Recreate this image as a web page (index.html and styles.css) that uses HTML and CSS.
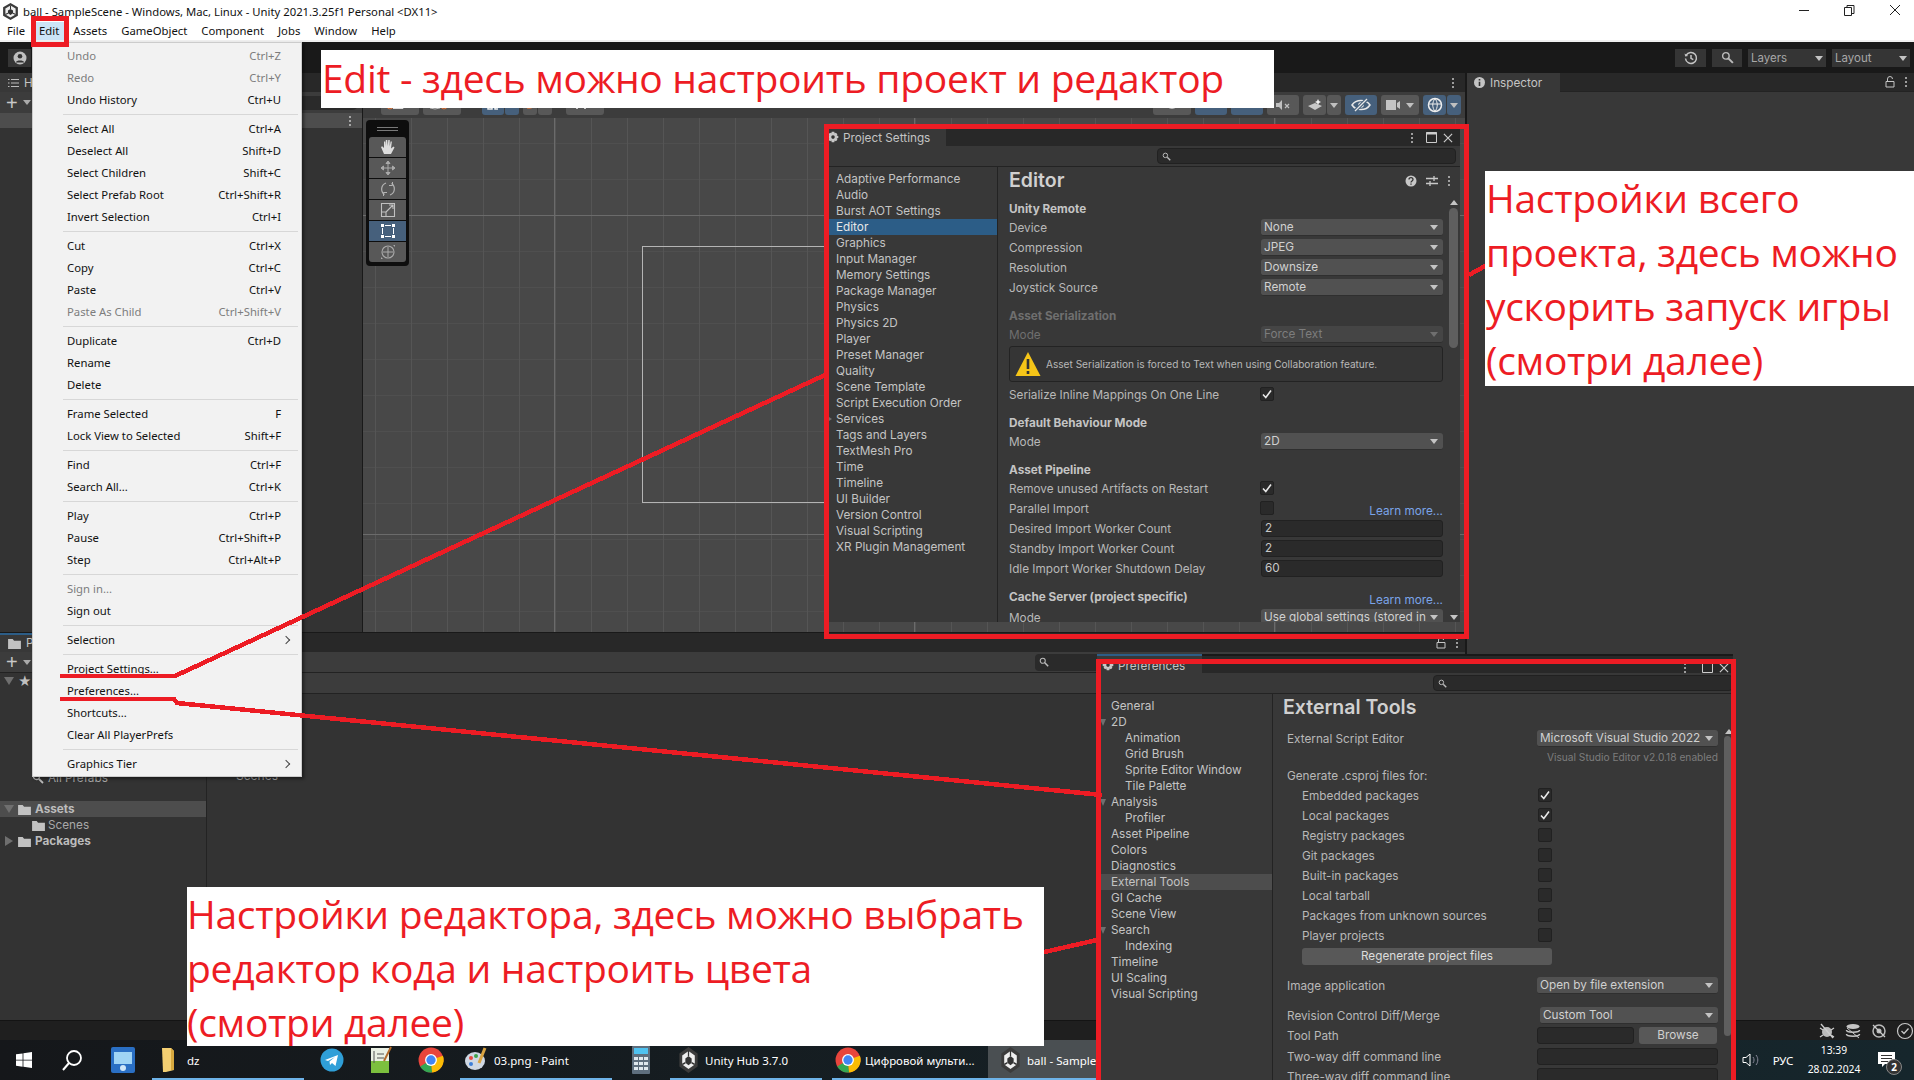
FILE: index.html
```html
<!DOCTYPE html>
<html lang="ru">
<head>
<meta charset="utf-8">
<title>ball - SampleScene</title>
<link rel="stylesheet" href="styles.css">
</head>
<body>
<svg class="defs" width="0" height="0">
  <symbol id="unity" viewBox="0 0 20 20"><polygon points="10,0 18.7,5 18.7,15 10,20 1.3,15 1.3,5" fill="#3b3b3b"/><polygon points="10,3 16,6.5 16,13.5 10,17 4,13.5 4,6.5" fill="#eee"/><polygon points="10,7 13,8.8 13,12.2 10,14 7,12.2 7,8.8" fill="#333"/><path d="M10 3v4M4 13.5l3-1.4M16 13.5l-3-1.4" stroke="#333" stroke-width="1.2"/></symbol>
  <symbol id="gear" viewBox="0 0 12 12"><path d="M6 .2l1.300.1.400 1.500 1.200-.5 1.500 1.400-.7 1.200 1.600.6v2l-1.600.6.7 1.200-1.500 1.400-1.200-.6-.4 1.600H4.700l-.4-1.600-1.200.6-1.500-1.400.7-1.200L.7 6.500v-2l1.600-.6-.7-1.200L3.100 1.300l1.200.5.400-1.500z" fill="#c8c8c8"/><circle cx="6" cy="5.600" r="1.800" fill="#333"/></symbol>
  <symbol id="glass" viewBox="0 0 12 12"><circle cx="4.500" cy="4.500" r="3" fill="none" stroke="#bbb" stroke-width="1.300"/><path d="M7 7l4 4" stroke="#bbb" stroke-width="1.800"/></symbol>
  <symbol id="check" viewBox="0 0 12 12"><path d="M2 6.500l2.800 3L10 2.500" fill="none" stroke="#e8e8e8" stroke-width="1.600"/></symbol>
  <symbol id="folder" viewBox="0 0 14 12"><path d="M0 1h5l1.500 2H14v9H0z" fill="#c2c2c2"/></symbol>
  <symbol id="dots" viewBox="0 0 4 12"><circle cx="2" cy="2" r="1" fill="#c4c4c4"/><circle cx="2" cy="6" r="1" fill="#c4c4c4"/><circle cx="2" cy="10" r="1" fill="#c4c4c4"/></symbol>
  <symbol id="chrome" viewBox="0 0 24 24"><circle cx="12" cy="12" r="11.500" fill="#e8453c"/><path d="M12 12L2 18a11.500 11.500 0 0 0 11 5.500z" fill="#34a853"/><path d="M12 12l11-4a11.500 11.500 0 0 1-10 15.500z" fill="#fbbc05"/><circle cx="12" cy="12" r="5.500" fill="#fff"/><circle cx="12" cy="12" r="4.300" fill="#4285f4"/></symbol>
</svg>

<header class="titlebar">
  <svg class="ti-logo"><use href="#unity"/></svg>
  <span class="ti-text">ball - SampleScene - Windows, Mac, Linux - Unity 2021.3.25f1 Personal &lt;DX11&gt;</span>
  <div class="winctl">
    <svg width="46" height="22" viewBox="0 0 46 22"><path d="M23 10.500h10" stroke="#222"/></svg>
    <svg width="46" height="22" viewBox="0 0 46 22"><path d="M22.500 7.500h7v8h-7zM25 7.500V5.500h7v8h-2.500" fill="none" stroke="#222"/></svg>
    <svg width="46" height="22" viewBox="0 0 46 22"><path d="M22 5l10 10M32 5L22 15" stroke="#222"/></svg>
  </div>
</header>
<nav class="menubar">
  <span class="mi">File</span><span class="mi mi-on">Edit</span><span class="mi">Assets</span><span class="mi">GameObject</span><span class="mi">Component</span><span class="mi">Jobs</span><span class="mi">Window</span><span class="mi">Help</span>
</nav>
<div class="toolbar">
  <div class="tbtn account"><svg width="14" height="14" viewBox="0 0 14 14"><circle cx="7" cy="7" r="6.500" fill="#c0c0c0"/><circle cx="7" cy="5.300" r="2.300" fill="#333"/><path d="M2.800 11.500c.6-2.600 7.800-2.600 8.400 0" fill="#333"/></svg></div>
  <div class="tb-right">
    <div class="tbtn hist"><svg width="14" height="14" viewBox="0 0 14 14"><path d="M2.200 4.200A5.500 5.500 0 1 1 1.500 7.500" fill="none" stroke="#c4c4c4" stroke-width="1.500"/><path d="M.6 2.500l.6 3 3-.6z" fill="#c4c4c4"/><path d="M7 4v3.300l2.300 1.300" fill="none" stroke="#c4c4c4" stroke-width="1.500"/></svg></div>
    <div class="tbtn srch"><svg width="13" height="13"><use href="#glass"/></svg></div>
    <div class="tbtn tdd">Layers</div>
    <div class="tbtn tdd">Layout</div>
  </div>
</div>

<main class="workspace">
  <div class="editor-left">
    <div class="upper">
      <section class="hierarchy">
        <div class="tabstrip"><span class="tab tab-h"><svg class="noshrink" width="11" height="10" viewBox="0 0 11 10"><path d="M3 1.500h8M3 5h8M3 8.500h8M0 1.500h1.500M0 5h1.500M0 8.500h1.500" stroke="#bbb"/></svg>H</span></div>
        <div class="h-tools"><span class="plus">+</span><span class="caret"></span><span class="h-search"></span></div>
        <div class="h-head"><span class="grow"></span><svg class="vdots"><use href="#dots"/></svg></div>
        <div class="h-body"></div>
      </section>
      <section class="scene">
        <div class="tabstrip end"><svg class="vdots"><use href="#dots"/></svg></div>
        <div class="scene-tools">
          <span class="sb w38"><svg width="30" height="20" viewBox="0 0 30 20"><circle cx="5" cy="11" r="3" fill="none" stroke="#d9743a"/><path d="M8 13.500h10v-5" fill="none" stroke="#ddd"/></svg></span><span class="sb w38"><svg width="30" height="20" viewBox="0 0 30 20"><path d="M3 13l5 1 5-1" fill="none" stroke="#bbb"/><circle cx="17" cy="11" r="3" fill="none" stroke="#d9743a"/></svg></span>
          <span class="sb w22 blue ml20"><svg width="16" height="20" viewBox="0 0 16 20"><path d="M3 9v5h4V9M10 9v5h3" fill="none" stroke="#eee" stroke-width="1.500"/></svg></span><span class="sb w14 blue join"></span>
          <span class="sb w14 ml4"><svg width="12" height="20" viewBox="0 0 12 20"><path d="M3 13c3 1 6 0 7-3" fill="none" stroke="#d9743a"/></svg></span><span class="sb w14 join"></span>
          <span class="sb w38 ml14"><svg width="30" height="20" viewBox="0 0 30 20"><path d="M6 9v5h2V9M14 9v5h2V9" fill="#ccc"/></svg></span>
          <span class="spacer"></span>
          <span class="sb w38"><svg width="30" height="20" viewBox="0 0 30 20"><circle cx="15" cy="8" r="6" fill="#bdbdbd"/></svg></span>
          <span class="sb w32 blue"><svg width="20" height="20" viewBox="0 0 20 20"><path d="M3 9h5v3H3zM11 9h6v3h-6z" fill="#eee"/></svg></span><span class="sb w32 blue"><svg width="20" height="20" viewBox="0 0 20 20"><path d="M8 9h4v4H8z" fill="#eee"/></svg></span>
          <span class="sb w32"><svg width="18" height="14" viewBox="0 0 18 14"><path d="M2 5h3l3-3v10L5 9H2z" fill="#c0c0c0"/><path d="M11 6l4 4M15 6l-4 4" stroke="#c0c0c0" stroke-width="1.200"/></svg></span>
          <span class="sb w23"><svg width="18" height="14" viewBox="0 0 18 14"><path d="M2 8l7-3 7 3-7 4z" fill="#c8c8c8"/><path d="M12 1l1 2 2 1-2 1-1 2-1-2-2-1 2-1z" fill="#eee"/></svg></span><span class="sb w14 join tri"></span>
          <span class="sb w32 blue"><svg width="22" height="14" viewBox="0 0 22 14"><path d="M2 7c4-6 14-6 18 0-4 6-14 6-18 0z" fill="none" stroke="#e8e8e8" stroke-width="1.500"/><circle cx="11" cy="7" r="2.800" fill="#e8e8e8"/><path d="M5 13L17 1" stroke="#46607c" stroke-width="3.500"/><path d="M5 13L17 1" stroke="#e8e8e8" stroke-width="1.300"/></svg></span>
          <span class="sb w38 cam"><svg width="14" height="12" viewBox="0 0 14 12"><path d="M0 1h10v10H0zM11 4l3-2v8l-3-2z" fill="#c4c4c4"/></svg><i class="tri-i"></i></span>
          <span class="sb w23 blue"><svg width="16" height="16" viewBox="0 0 16 16"><circle cx="8" cy="8" r="6.500" fill="none" stroke="#eee" stroke-width="1.500"/><path d="M1.500 7h13M8 1.500c-3 4-3 9 0 13M8 1.500c3 4 3 9 0 13" stroke="#eee" fill="none"/></svg></span><span class="sb w14 blue join tri"></span>
        </div>
        <div class="viewport">
          <div class="rect2d"></div>
          <div class="palette">
            <div class="pal-grip"></div>
            <div class="pal-btn"><svg width="16" height="16" viewBox="0 0 16 16"><path d="M4 15L1 8l1.200-.8L4 9V2.500h1.300L5.800 7V1h1.500l.4 6 .6-6h1.400l0 6.500.9-5h1.300L11 9.500l2.500-2 1 1L11 15z" fill="#ddd"/></svg></div>
            <div class="pal-btn"><svg width="16" height="16" viewBox="0 0 16 16"><path d="M8 1l2 2.500H6zM8 15l2-2.500H6zM1 8l2.500-2v4zM15 8l-2.500-2v4zM3 8h10M8 3v10" fill="#aaa" stroke="#aaa"/></svg></div>
            <div class="pal-btn"><svg width="16" height="16" viewBox="0 0 16 16"><path d="M11.500 2.500A6.500 6.500 0 0 1 10 14M4.500 13.500A6.500 6.500 0 0 1 6 2" fill="none" stroke="#b4b4b4" stroke-width="1.200"/><path d="M12.500 1v3.500H9M3.500 15v-3.500H7" fill="none" stroke="#b4b4b4"/></svg></div>
            <div class="pal-btn"><svg width="16" height="16" viewBox="0 0 16 16"><path d="M1.500 1.500h13v13h-13zM1.500 10h4.500v4.500M6 10l7-7M9 3h4v4" fill="none" stroke="#c0c0c0" stroke-width="1.100"/></svg></div>
            <div class="pal-btn on"><svg width="16" height="16" viewBox="0 0 16 16"><path d="M1 1h3v3H1zM12 1h3v3h-3zM1 12h3v3H1zM12 12h3v3h-3z" fill="#fff"/><path d="M5 2.500h6M5 13.500h6M2.500 5v6M13.500 5v6" stroke="#fff"/></svg></div>
            <div class="pal-btn"><svg width="16" height="16" viewBox="0 0 16 16"><circle cx="8" cy="8" r="6" fill="none" stroke="#aaa" stroke-width="1.100"/><path d="M8 3v10M3 8h10" stroke="#aaa"/><path d="M13 1l2 0 0 2M1 15l2 0-2-2z" fill="#aaa"/></svg></div>
          </div>
        </div>
      </section>
    </div>
    <section class="project">
      <div class="tabstrip"><span class="tab tab-p"><svg class="noshrink" width="13" height="11"><use href="#folder"/></svg>P</span><span class="tab-end"><svg width="12" height="12" viewBox="0 0 12 12"><path d="M3.500 5V3a2.500 2.500 0 0 1 5 0M2 5.500h8V11H2z" fill="none" stroke="#c4c4c4"/></svg><svg class="vdots"><use href="#dots"/></svg></span></div>
      <div class="p-tools"><span class="plus">+</span><span class="caret"></span><span class="grow"></span><span class="p-search"><svg width="10" height="10"><use href="#glass"/></svg></span></div>
      <div class="p-main">
        <div class="p-tree">
          <div class="tree-row"><i class="arr down"></i><span class="star">★</span></div>
          <div class="tree-row r-prefabs"><svg class="tree-glass" width="12" height="12"><use href="#glass"/></svg>All Prefabs</div>
          <div class="tree-row r-assets sel"><i class="arr down"></i><svg class="fold" width="13" height="11"><use href="#folder"/></svg><b>Assets</b></div>
          <div class="tree-row r-scenes"><svg class="fold" width="13" height="11"><use href="#folder"/></svg>Scenes</div>
          <div class="tree-row"><i class="arr right"></i><svg class="fold" width="13" height="11"><use href="#folder"/></svg><b>Packages</b></div>
        </div>
        <div class="p-files">
          <div class="p-crumb"></div>
          <div class="p-item">Scenes</div>
        </div>
      </div>
    </section>
  </div>
  <section class="inspector">
    <div class="tabstrip">
      <span class="tab tab-i"><svg width="11" height="11" viewBox="0 0 11 11"><circle cx="5.500" cy="5.500" r="5.500" fill="#c4c4c4"/><path d="M5.500 2v1.500M5.500 4.800V9" stroke="#333" stroke-width="1.600"/></svg>Inspector</span>
      <span class="tab-end"><svg width="12" height="12" viewBox="0 0 12 12"><path d="M3.500 5V3a2.500 2.500 0 0 1 5 0M2 5.500h8V11H2z" fill="none" stroke="#c4c4c4"/></svg><svg class="vdots"><use href="#dots"/></svg></span>
    </div>
  </section>
</main>

<div class="statusbar">
  <svg width="18" height="18" viewBox="0 0 18 18"><circle cx="9" cy="10" r="5" fill="#bbb"/><path d="M3 2l12 14M2 6l3 2M16 6l-3 2M2 15l3-2M16 15l-3-2" stroke="#ccc" stroke-width="1.300"/></svg>
  <svg width="18" height="18" viewBox="0 0 18 18"><ellipse cx="9" cy="4.500" rx="6.500" ry="2.500" fill="#c4c4c4"/><path d="M2.500 8c0 3 13 3 13 0M2.500 12c0 3 13 3 13 0" fill="none" stroke="#c4c4c4" stroke-width="1.600"/><path d="M3 6l12 10" stroke="#c4c4c4"/></svg>
  <svg width="18" height="18" viewBox="0 0 18 18"><circle cx="9" cy="9" r="6" fill="none" stroke="#bbb" stroke-width="1.500"/><circle cx="9" cy="9" r="2.500" fill="#bbb"/><path d="M3 3l12 12" stroke="#ccc" stroke-width="1.300"/></svg>
  <svg width="18" height="18" viewBox="0 0 18 18"><circle cx="9" cy="9" r="7.500" fill="none" stroke="#c8c8c8" stroke-width="1.200"/><path d="M5.500 9l2.500 2.500 4.500-5" fill="none" stroke="#c8c8c8" stroke-width="1.300"/></svg>
</div>

<footer class="taskbar">
  <div class="tk tk-start"><svg width="16" height="16" viewBox="0 0 16 16"><path d="M0 2.300l6.600-.9v6.300H0zM7.400 1.300L16 0v7.700H7.400zM0 8.400h6.600v6.300L0 13.800zM7.400 8.400H16V16l-8.600-1.200z" fill="#fff"/></svg></div>
  <div class="tk tk-search"><svg width="22" height="22" viewBox="0 0 22 22"><circle cx="13" cy="9" r="7" fill="none" stroke="#fff" stroke-width="1.800"/><path d="M8 14l-6 7" stroke="#fff" stroke-width="2"/></svg></div>
  <div class="tk tk-desk"><svg width="24" height="26" viewBox="0 0 24 26"><rect width="24" height="26" rx="2" fill="#2a6fc4"/><rect x="3" y="5" width="18" height="12" fill="#9fd4f5"/><circle cx="12" cy="21" r="3" fill="#cfe6f8"/></svg></div>
  <div class="tk tk-app u-dz"><svg width="14" height="24" viewBox="0 0 14 24"><path d="M0 0h9l3 3v19l-8 2H1z" fill="#f4cf72"/><path d="M9 0l3 3v19H9z" fill="#d8a93f"/></svg><span>dz</span></div>
  <div class="tk tk-pin p-tg"><svg width="24" height="24" viewBox="0 0 24 24"><circle cx="12" cy="12" r="11.500" fill="#2f9fd8"/><path d="M5 12l13-5-2.500 11-3.500-3-2 2-.5-3.500 5.500-4.500-7 4z" fill="#fff"/></svg></div>
  <div class="tk tk-pin p-nt"><svg width="22" height="28" viewBox="0 0 22 28"><rect x="1" y="2" width="18" height="25" fill="#e9efe3"/><rect x="1" y="15" width="18" height="12" fill="#7cbf3e"/><path d="M4 5v12M7 8h7M7 12h7" stroke="#555"/><path d="M21 1l-7 14" stroke="#b36a2a" stroke-width="2"/></svg></div>
  <div class="tk tk-pin p-ch"><svg width="26" height="26"><use href="#chrome"/></svg></div>
  <div class="tk tk-app u-pa"><svg width="24" height="26" viewBox="0 0 24 26"><ellipse cx="11" cy="14" rx="10" ry="9" fill="#cfd8e3"/><circle cx="7" cy="11" r="2" fill="#e5483f"/><circle cx="12" cy="9" r="2" fill="#3fa34d"/><circle cx="7" cy="17" r="2" fill="#3d7fd8"/><path d="M21 1l-6 15" stroke="#d9a441" stroke-width="3"/></svg><span>03.png - Paint</span></div>
  <div class="tk tk-pin p-ca"><svg width="18" height="28" viewBox="0 0 18 28"><rect width="18" height="28" rx="1" fill="#5e6e7d"/><rect x="2" y="2" width="14" height="6" fill="#4fc2f0"/><path d="M2 11h4v3H2zM7 11h4v3H7zM12 11h4v3h-4zM2 16h4v3H2zM7 16h4v3H7zM12 16h4v3h-4zM2 21h4v3H2zM7 21h4v3H7zM12 21h4v3h-4z" fill="#dfe8ee"/></svg></div>
  <div class="tk tk-app u-hub"><svg width="21" height="26" viewBox="0 0 20 20" preserveAspectRatio="none"><use href="#unity"/></svg><span>Unity Hub 3.7.0</span></div>
  <div class="tk tk-app u-mu"><svg width="26" height="26"><use href="#chrome"/></svg><span>Цифровой мульти...</span></div>
  <div class="tk tk-app u-ball on"><svg width="21" height="26" viewBox="0 0 20 20" preserveAspectRatio="none"><use href="#unity"/></svg><span>ball - Sample</span></div>
  <div class="tray">
    <svg class="tr-vol" width="18" height="16" viewBox="0 0 18 16"><path d="M1 5.500h3L8 2v12L4 10.500H1z" fill="none" stroke="#fff"/><path d="M11 5c1.400 2 1.400 4 0 6M14 3c2.400 3 2.400 7 0 10" fill="none" stroke="#889" stroke-width="1"/></svg>
    <span class="tr-lang">РУС</span>
    <div class="tr-clock"><span>13:39</span><span>28.02.2024</span></div>
    <div class="tr-note"><svg width="18" height="16" viewBox="0 0 18 16"><path d="M0 0h17v12H7l-3 3v-3H0z" fill="#fff"/><path d="M3 3.500h11M3 6.500h11M3 9.500h7" stroke="#333"/></svg><span class="badge">2</span></div>
  </div>
</footer>

<!-- floating: Edit menu -->
<div class="menu">
  <div class="item off"><span>Undo</span><kbd>Ctrl+Z</kbd></div>
  <div class="item off"><span>Redo</span><kbd>Ctrl+Y</kbd></div>
  <div class="item"><span>Undo History</span><kbd>Ctrl+U</kbd></div>
  <hr>
  <div class="item"><span>Select All</span><kbd>Ctrl+A</kbd></div>
  <div class="item"><span>Deselect All</span><kbd>Shift+D</kbd></div>
  <div class="item"><span>Select Children</span><kbd>Shift+C</kbd></div>
  <div class="item"><span>Select Prefab Root</span><kbd>Ctrl+Shift+R</kbd></div>
  <div class="item"><span>Invert Selection</span><kbd>Ctrl+I</kbd></div>
  <hr>
  <div class="item"><span>Cut</span><kbd>Ctrl+X</kbd></div>
  <div class="item"><span>Copy</span><kbd>Ctrl+C</kbd></div>
  <div class="item"><span>Paste</span><kbd>Ctrl+V</kbd></div>
  <div class="item off"><span>Paste As Child</span><kbd>Ctrl+Shift+V</kbd></div>
  <hr>
  <div class="item"><span>Duplicate</span><kbd>Ctrl+D</kbd></div>
  <div class="item"><span>Rename</span></div>
  <div class="item"><span>Delete</span></div>
  <hr>
  <div class="item"><span>Frame Selected</span><kbd>F</kbd></div>
  <div class="item"><span>Lock View to Selected</span><kbd>Shift+F</kbd></div>
  <hr>
  <div class="item"><span>Find</span><kbd>Ctrl+F</kbd></div>
  <div class="item"><span>Search All...</span><kbd>Ctrl+K</kbd></div>
  <hr>
  <div class="item"><span>Play</span><kbd>Ctrl+P</kbd></div>
  <div class="item"><span>Pause</span><kbd>Ctrl+Shift+P</kbd></div>
  <div class="item"><span>Step</span><kbd>Ctrl+Alt+P</kbd></div>
  <hr>
  <div class="item off"><span>Sign in...</span></div>
  <div class="item"><span>Sign out</span></div>
  <hr>
  <div class="item sub"><span>Selection</span></div>
  <hr>
  <div class="item"><span>Project Settings...</span></div>
  <div class="item"><span>Preferences...</span></div>
  <div class="item"><span>Shortcuts...</span></div>
  <div class="item"><span>Clear All PlayerPrefs</span></div>
  <hr>
  <div class="item sub"><span>Graphics Tier</span></div>
</div>

<!-- floating: Project Settings -->
<div class="win win-ps">
  <div class="w-tabs"><span class="w-tab"><svg width="12" height="13"><use href="#gear"/></svg>Project Settings</span><span class="w-ctl"><svg class="vdots"><use href="#dots"/></svg><svg width="11" height="11" viewBox="0 0 11 11"><path d="M.5 .5h10v10H.5z" fill="none" stroke="#ccc"/><path d="M0 1.500h11" stroke="#ccc" stroke-width="2"/></svg><svg width="10" height="10" viewBox="0 0 11 11"><path d="M1 1l9 9M10 1l-9 9" stroke="#ccc" stroke-width="1.300"/></svg></span></div>
  <div class="w-tool"><span class="w-search"><svg width="9" height="9"><use href="#glass"/></svg></span></div>
  <div class="w-main">
    <ul class="w-list">
      <li>Adaptive Performance</li><li>Audio</li><li>Burst AOT Settings</li><li class="sel-blue">Editor</li><li>Graphics</li><li>Input Manager</li><li>Memory Settings</li><li>Package Manager</li><li>Physics</li><li>Physics 2D</li><li>Player</li><li>Preset Manager</li><li>Quality</li><li>Scene Template</li><li>Script Execution Order</li><li class="svc">Services</li><li>Tags and Layers</li><li>TextMesh Pro</li><li>Time</li><li>Timeline</li><li>UI Builder</li><li>Version Control</li><li>Visual Scripting</li><li>XR Plugin Management</li>
    </ul>
    <div class="w-pane">
      <div class="w-title"><h1>Editor</h1>
        <span class="w-icons"><svg width="12" height="12" viewBox="0 0 12 12"><circle cx="6" cy="6" r="5.500" fill="#c8c8c8"/><path d="M4 4.500c0-2.500 4-2.500 4 0 0 1.500-2 1.500-2 3M6 8.500v1.300" fill="none" stroke="#333" stroke-width="1.300"/></svg><svg width="12" height="12" viewBox="0 0 12 12"><path d="M0 3.500h12M0 8.500h12M8 1v5M4 6v5" stroke="#c8c8c8" stroke-width="1.300"/></svg><svg class="vdots"><use href="#dots"/></svg></span>
      </div>
      <div class="w-scroll">
        <div class="rows">
          <h2>Unity Remote</h2>
          <div class="row"><label>Device</label><div class="dd">None</div></div>
          <div class="row"><label>Compression</label><div class="dd">JPEG</div></div>
          <div class="row"><label>Resolution</label><div class="dd">Downsize</div></div>
          <div class="row"><label>Joystick Source</label><div class="dd">Remote</div></div>
          <h2 class="dim">Asset Serialization</h2>
          <div class="row dim"><label>Mode</label><div class="dd off">Force Text</div></div>
          <div class="help"><svg width="26" height="26" viewBox="0 0 26 26"><path d="M13 1L25.500 25H.5z" fill="#f5c518"/><path d="M13 8v10M13 20v3" stroke="#333" stroke-width="2.600"/></svg><span>Asset Serialization is forced to Text when using Collaboration feature.</span></div>
          <div class="row after-help"><label>Serialize Inline Mappings On One Line</label><div class="cb"><svg width="12" height="12"><use href="#check"/></svg></div></div>
          <h2>Default Behaviour Mode</h2>
          <div class="row"><label>Mode</label><div class="dd">2D</div></div>
          <h2>Asset Pipeline</h2>
          <div class="row"><label>Remove unused Artifacts on Restart</label><div class="cb"><svg width="12" height="12"><use href="#check"/></svg></div></div>
          <div class="row"><label>Parallel Import</label><div class="cb"></div><a class="learn">Learn more...</a></div>
          <div class="row"><label>Desired Import Worker Count</label><div class="inp">2</div></div>
          <div class="row"><label>Standby Import Worker Count</label><div class="inp">2</div></div>
          <div class="row"><label>Idle Import Worker Shutdown Delay</label><div class="inp">60</div></div>
          <h2 class="h-link">Cache Server (project specific)<a class="learn">Learn more...</a></h2>
          <div class="row r-last"><label>Mode</label><div class="dd">Use global settings (stored in</div></div>
        </div>
        <div class="sbar"><i class="up"></i><b class="thumb-ps"></b><i class="dn"></i></div>
      </div>
    </div>
  </div>
</div>

<!-- floating: Preferences -->
<div class="win win-pf">
  <div class="w-tabs"><span class="w-tab"><svg width="12" height="13"><use href="#gear"/></svg>Preferences</span><span class="w-ctl"><svg class="vdots"><use href="#dots"/></svg><svg width="11" height="11" viewBox="0 0 11 11"><path d="M.5 .5h10v10H.5z" fill="none" stroke="#ccc"/></svg><svg width="10" height="10" viewBox="0 0 11 11"><path d="M1 1l9 9M10 1l-9 9" stroke="#ccc" stroke-width="1.300"/></svg></span></div>
  <div class="w-tool"><span class="w-search"><svg width="9" height="9"><use href="#glass"/></svg></span></div>
  <div class="w-main">
    <ul class="w-list">
      <li>General</li><li class="tw">2D</li><li class="in">Animation</li><li class="in">Grid Brush</li><li class="in">Sprite Editor Window</li><li class="in">Tile Palette</li><li class="tw">Analysis</li><li class="in">Profiler</li><li>Asset Pipeline</li><li>Colors</li><li>Diagnostics</li><li class="sel-grey">External Tools</li><li>GI Cache</li><li>Scene View</li><li class="tw">Search</li><li class="in">Indexing</li><li>Timeline</li><li>UI Scaling</li><li>Visual Scripting</li>
    </ul>
    <div class="w-pane">
      <div class="w-title"><h1>External Tools</h1></div>
      <div class="w-scroll">
        <div class="rows">
          <div class="row"><label>External Script Editor</label><div class="dd">Microsoft Visual Studio 2022</div></div>
          <div class="note">Visual Studio Editor v2.0.18 enabled</div>
          <div class="row"><label>Generate .csproj files for:</label></div>
          <div class="row ind"><label>Embedded packages</label><div class="cb"><svg width="12" height="12"><use href="#check"/></svg></div></div>
          <div class="row ind"><label>Local packages</label><div class="cb"><svg width="12" height="12"><use href="#check"/></svg></div></div>
          <div class="row ind"><label>Registry packages</label><div class="cb"></div></div>
          <div class="row ind"><label>Git packages</label><div class="cb"></div></div>
          <div class="row ind"><label>Built-in packages</label><div class="cb"></div></div>
          <div class="row ind"><label>Local tarball</label><div class="cb"></div></div>
          <div class="row ind"><label>Packages from unknown sources</label><div class="cb"></div></div>
          <div class="row ind"><label>Player projects</label><div class="cb"></div></div>
          <div class="regen">Regenerate project files</div>
          <div class="row r-img"><label>Image application</label><div class="dd">Open by file extension</div></div>
          <div class="row r-rev"><label>Revision Control Diff/Merge</label><div class="dd">Custom Tool</div></div>
          <div class="row"><label>Tool Path</label><div class="inp i-path"></div><div class="browse">Browse</div></div>
          <div class="row r-two"><label>Two-way diff command line</label><div class="inp"></div></div>
          <div class="row"><label>Three-way diff command line</label><div class="inp"></div></div>
        </div>
        <div class="sbar"><i class="up"></i><b class="thumb-pf"></b></div>
      </div>
    </div>
  </div>
</div>

<!-- annotations drawn on top of the screenshot -->
<div class="frame frame-ps"></div>
<div class="frame frame-pf"></div>
<div class="frame frame-edit"></div>
<svg class="ink" width="1914" height="1080" viewBox="0 0 1914 1080">
  <path d="M60 676H175L825 375"/>
  <path d="M60 699H174L177 703L1102 795"/>
  <path d="M1469 275L1487 265"/>
  <path d="M1040 953L1097 940"/>
</svg>
<div class="note-box nb-edit">Edit - здесь можно настроить проект и редактор</div>
<div class="note-box nb-proj">Настройки всего<br>проекта, здесь можно<br>ускорить запуск игры<br>(смотри далее)</div>
<div class="note-box nb-pref">Настройки редактора, здесь можно выбрать<br>редактор кода и настроить цвета<br>(смотри далее)</div>
</body>
</html>
```
FILE: styles.css
```css
* { box-sizing: border-box; }
html, body { margin: 0; padding: 0; }
body {
  width: 1914px; height: 1080px; overflow: hidden; position: relative;
  display: flex; flex-direction: column;
  background: #191919; color: #c4c4c4;
  font: 11.750px/16px Inter, "Liberation Sans", sans-serif;
}
.defs { position: absolute; }
.vdots { width: 4px; height: 12px; flex: none; }
.grow { flex: 1; }
.noshrink { flex: none; }

/* title + menu */
.titlebar { height: 22px; background: #fff; display: flex; align-items: center; color: #111;
  font: 11.300px "Noto Sans", sans-serif; }
.ti-logo { width: 17px; height: 17px; margin: 0 4px 0 2px; }
.winctl { margin-left: auto; display: flex; padding-right: 0; }
.menubar { height: 20px; background: #fff; border-bottom: 2px solid #f0f0f0; display: flex;
  font: 11.300px/18px "Noto Sans", sans-serif; color: #111; }
.mi { padding: 0 7px; }
.mi-on { background: linear-gradient(#cce4f7, #cce4f7) center / 29px 100% no-repeat; }

/* main toolbar */
.toolbar { height: 31px; background: #191919; display: flex; align-items: center; padding: 0 4px 0 8px; }
.tbtn { height: 18px; background: #353535; display: flex; align-items: center; justify-content: center; color: #a8a8a8; font-size: 11.500px; }
.account { width: 23px; }
.tb-right { margin-left: auto; display: flex; gap: 6px; }
.hist { width: 31px; } .srch { width: 30px; }
.tdd { width: 78px; justify-content: flex-start; padding-left: 3px; position: relative; }
.tdd::after { content: ""; position: absolute; right: 3px; top: 7px; border: 4px solid transparent; border-top: 5px solid #c4c4c4; border-bottom: 0; }

/* workspace */
.workspace { height: 947px; display: flex; gap: 2px; background: #191919; }
.editor-left { width: 1465px; display: flex; flex-direction: column; gap: 1px; }
.upper { height: 559px; display: flex; gap: 1px; }
.tabstrip { height: 19px; background: #282828; display: flex; align-items: center; flex: none; }
.tabstrip.end { justify-content: flex-end; padding-right: 10px; }
.tab { height: 19px; background: #383838; display: flex; align-items: center; gap: 5px; padding: 1px 0 0 8px; overflow: hidden; }
.tab-end { margin-left: auto; display: flex; align-items: center; gap: 8px; padding-right: 6px; }

.hierarchy { width: 362px; display: flex; flex-direction: column; background: #333; }
.tab-h { width: 32px; }
.h-tools { height: 21px; background: #3c3c3c; display: flex; align-items: center; padding-left: 6px; }
.plus { font: 20px/20px "Liberation Sans", sans-serif; color: #c8c8c8; width: 15px; }
.caret { border: 4px solid transparent; border-top: 5px solid #aaa; border-bottom: 0; margin-left: 2px; }
.h-search { margin-left: 40px; width: 288px; height: 14px; background: #2a2a2a; border-radius: 7px; }
.h-head { height: 15px; background: #4d4d4d; display: flex; align-items: center; padding: 0 10px 0 32px; font-size: 11px; }
.h-body { flex: 1; background: #333; }

.scene { flex: 1; display: flex; flex-direction: column; min-width: 0; }
.scene-tools { height: 26px; background: #3c3c3c; display: flex; gap: 4px; padding: 3px 4px 3px 18px; flex: none; }
.sb { height: 20px; background: #585858; border-radius: 3px; display: flex; align-items: center; justify-content: center; flex: none; }
.sb.blue { background: #46607c; }
.w38 { width: 38px; } .w32 { width: 32px; } .w23 { width: 23px; } .w22 { width: 22px; } .w14 { width: 14px; }
.ml20 { margin-left: 17px; } .ml4 { margin-left: 0; } .ml14 { margin-left: 10px; }
.join { margin-left: -3px; }
.spacer { flex: 1; }
.tri::after, .tri-i { content: ""; border: 4px solid transparent; border-top: 5px solid #c0c0c0; border-bottom: 0; }
.cam { gap: 6px; }
.viewport { flex: 1; position: relative; overflow: hidden; background-color: #484848;
  background-image:
    linear-gradient(#6b6b6b, #6b6b6b), linear-gradient(#6b6b6b, #6b6b6b),
    linear-gradient(90deg, #6b6b6b 1px, transparent 1px),
    linear-gradient(90deg, #555 1px, transparent 1px),
    linear-gradient(#4f4f4f 1px, transparent 1px);
  background-repeat: no-repeat, no-repeat, repeat, repeat, repeat;
  background-size: 100% 1px, 100% 1px, 360px 100%, 36px 100%, 36px 36px;
  background-position: 0 97px, 0 416px, 191px 0, 12px 0, 0 25px; }
.rect2d { position: absolute; left: 279px; top: 128px; width: 700px; height: 257px; border: 1px solid #b4b4b4; }
.palette { position: absolute; left: 3px; top: 2px; width: 43px; height: 146px; background: #0e0e0e; border-radius: 4px; padding: 0 3px; display: flex; flex-direction: column; gap: 1px; }
.pal-grip { height: 16px; margin: 0 8px; position: relative; background: linear-gradient(#7a7a7a,#7a7a7a) 0 7px/100% 1px no-repeat, linear-gradient(#7a7a7a,#7a7a7a) 0 10px/100% 1px no-repeat; }
.pal-btn { height: 20px; background: #585858; display: flex; align-items: center; justify-content: center; }
.pal-btn:nth-child(2) { border-radius: 3px 3px 0 0; }
.pal-btn:last-child { border-radius: 0 0 3px 3px; }
.pal-btn.on { background: #46607c; }

/* project panel */
.project { flex: 1; display: flex; flex-direction: column; background: #333; min-height: 0; }
.tab-p { width: 32px; box-shadow: inset 0 2px 0 #2c5d87; }
.p-tools { height: 21px; background: #3c3c3c; border-bottom: 1px solid #222; display: flex; align-items: center; padding-left: 6px; }
.p-search { width: 130px; height: 17px; margin-right: 300px; background: #2a2a2a; border-radius: 4px; display: flex; align-items: center; padding-left: 4px; }
.p-main { flex: 1; display: flex; }
.p-tree { width: 207px; border-right: 1px solid #232323; }
.tree-row { height: 16px; display: flex; align-items: center; color: #a8a8a8; position: relative; padding-left: 35px; }
.tree-row b { color: #bcbcbc; font-weight: 700; }
.arr { position: absolute; left: 3px; width: 0; height: 0; }
.arr.down { border: 5px solid transparent; border-top: 8px solid #6f6f6f; border-bottom: 0; top: 4px; left: 4px; }
.arr.right { border: 5px solid transparent; border-left: 8px solid #6f6f6f; border-right: 0; top: 3px; left: 5px; }
.star { position: absolute; left: 18px; font-size: 13px; color: #c0c0c0; }
.r-prefabs { margin-top: 81px; padding-left: 48px; }
.tree-glass { position: absolute; left: 32px; }
.r-assets { margin-top: 15px; }
.sel { background: #4d4d4d; }
.fold { position: absolute; left: 18px; }
.r-scenes { padding-left: 48px; }
.r-scenes .fold { left: 32px; }
.p-files { flex: 1; }
.p-crumb { height: 21px; background: #3c3c3c; border-bottom: 1px solid #222; }
.p-item { margin: 74px 0 0 29px; font-size: 12px; color: #a8a8a8; }

/* inspector */
.inspector { flex: 1; background: #383838; }
.inspector .tabstrip { border-bottom: 1px solid #232323; }
.tab-i { width: 93px; padding-left: 7px; gap: 5px; }

/* status + taskbar */
.statusbar { height: 20px; background: #1f1f1f; border-top: 1px solid #141414; display: flex; justify-content: flex-end; align-items: center; gap: 8px; }
.taskbar { height: 40px; background: linear-gradient(90deg, #15171a, #16262c); display: flex; color: #fff; font: 11.500px "Noto Sans", sans-serif; position: relative; }
.tk { display: flex; align-items: center; height: 40px; flex: none; }
.tk-start { width: 48px; padding-left: 16px; }
.tk-search { width: 48px; padding-left: 13px; }
.tk-desk { width: 56px; padding-left: 15px; }
.tk-app { gap: 6px; box-shadow: inset 0 -2px 0 #6eb3e8; padding-left: 8px; white-space: nowrap; overflow: hidden; }
.u-dz { width: 152px; gap: 11px; padding-left: 10px; }
.p-tg { margin-left: 4px; width: 48px; padding-left: 12px; }
.p-nt { width: 48px; padding-left: 14px; }
.p-ch { width: 56px; padding-left: 14px; }
.u-pa { width: 152px; gap: 6px; padding-left: 4px; }
.p-ca { margin-left: 5px; width: 53px; padding-left: 15px; }
.u-hub { width: 152px; gap: 6px; padding-left: 8px; }
.u-mu { margin-left: 10px; width: 156px; gap: 4px; padding-left: 3px; }
.u-ball { width: 110px; padding-left: 12px; }
.tk.on { background: #4a4f52; }
.tray { margin-left: auto; display: flex; align-items: center; height: 40px; width: 176px; }
.tr-vol { margin-left: 4px; width: 18px; flex: none; }
.tr-lang { width: 46px; text-align: center; font-size: 11.500px; flex: none; }
.tr-clock { width: 56px; flex: none; display: flex; flex-direction: column; align-items: center; line-height: 19px; font-size: 10.300px; white-space: nowrap; }
.tr-note { position: relative; margin-left: 16px; width: 18px; height: 16px; flex: none; }
.badge { position: absolute; left: 8px; top: 7px; width: 16px; height: 16px; border-radius: 50%; background: #333; border: 1px solid #888; font: 700 10px/14px "Noto Sans", sans-serif; text-align: center; }

/* edit menu */
.menu { position: absolute; left: 32px; top: 42px; width: 270px; height: 735px; background: #f2f2f2; border: 1px solid #ccc; padding-top: 2px; box-shadow: 2px 2px 3px rgba(0,0,0,.45); color: #111; font: 11.300px/22px "Noto Sans", sans-serif; z-index: 5; }
.menu hr { height: 1px; border: 0; background: #d7d7d7; margin: 3px 3px 3px 30px; }
.item { height: 22px; display: flex; justify-content: space-between; padding: 0 20px 0 34px; position: relative; }
.item kbd { font: inherit; }
.off { color: #7d7d7d; }
.sub::after { content: ""; position: absolute; right: 12px; top: 8px; width: 5px; height: 5px; border: solid #444; border-width: 1px 1px 0 0; transform: rotate(45deg); }

/* floating windows */
.win { position: absolute; background: #383838; display: flex; flex-direction: column; overflow: hidden; z-index: 3; }
.win-ps { left: 829px; top: 129px; width: 631px; height: 493px; }
.win-pf { left: 1097px; top: 654px; width: 636px; height: 426px; z-index: 6; box-shadow: inset 0 2px 0 #2c5d87; }
.w-tabs { height: 17px; background: #282828; display: flex; align-items: center; flex: none; }
.win-pf .w-tabs { height: 19px; box-shadow: inset 0 2px 0 #191919; }
.w-tab { width: 119px; height: 100%; background: #383838; display: flex; align-items: center; gap: 4px; margin-left: -2px; }
.win-pf .w-tab { width: 105px; margin-left: 0; padding: 4px 0 0 5px; box-shadow: inset 0 2px 0 #2c5d87; }
.w-ctl { margin-left: auto; display: flex; align-items: center; gap: 6px; padding-right: 7px; }
.w-ctl .vdots { margin-right: 6px; }
.win-pf .w-ctl { padding: 8px 4px 0 0; }
.win-pf .w-ctl .vdots { margin-right: 9px; }
.w-tool { height: 21px; border-bottom: 1px solid #232323; display: flex; justify-content: flex-end; align-items: flex-start; padding: 2px 4px 0 0; flex: none; }
.w-search { width: 299px; height: 16px; background: #2a2a2a; border: 1px solid #212121; border-radius: 4px; display: flex; align-items: center; padding-left: 4px; }
.win-pf .w-tool { padding-right: 0; }
.win-pf .w-search { width: 300px; }
.w-main { flex: 1; display: flex; min-height: 0; }
.w-list { list-style: none; margin: 0; padding: 4px 0 0; width: 169px; border-right: 1px solid #232323; flex: none; }
.w-list li { height: 16px; padding-left: 7px; white-space: nowrap; line-height: 16px; position: relative; }
.svc::before { content: ""; position: absolute; left: 0; top: 6px; border: 2px solid transparent; border-left: 3px solid #6f6f6f; border-right: 0; }
.win-pf .w-list { width: 176px; }
.win-pf .w-list li { padding-left: 14px; }
.win-pf .w-list li.in { padding-left: 28px; }
.win-pf .w-list li.tw::before { content: ""; position: absolute; left: 3px; top: 5px; border: 3px solid transparent; border-top: 7px solid #6f6f6f; border-bottom: 0; }
.sel-blue { background: #2c5d87; color: #e8e8e8; }
.sel-grey { background: #4d4d4d; }
.w-pane { flex: 1; display: flex; flex-direction: column; min-width: 0; }
.w-title { height: 33px; padding-left: 11px; display: flex; align-items: flex-start; flex: none; }
.w-title h1 { margin: 0; font: 600 19.500px/26px Inter, sans-serif; color: #d0d0d0; }
.w-icons { margin-left: auto; display: flex; gap: 9px; align-items: center; padding: 8px 9px 0 0; }
.win-pf .w-title { height: 35px; padding-left: 10px; }
.w-scroll { flex: 1; display: flex; min-height: 0; overflow: hidden; }
.rows { width: 434px; margin-left: 11px; flex: none; }
.win-pf .rows { width: 431px; margin-left: 14px; }
h2 { margin: 9px 0 0; height: 18px; font: 700 11.750px/18px Inter, sans-serif; color: #c4c4c4; display: flex; justify-content: space-between; }
.rows > h2:first-child { margin-top: 0; }
.dim, .dim label { color: #6f6f6f; }
.row { height: 20px; display: flex; align-items: center; position: relative; color: #b8b8b8; }
.row label { width: 252px; flex: none; white-space: nowrap; }
.ind label { width: 236px; }
.ind { padding-left: 15px; }
.dd { width: 182px; height: 17px; margin-bottom: 2px; background: #515151; border: 1px solid #2f2f2f; border-width: 0 0 1px; border-radius: 3px; color: #d0d0d0; line-height: 16px; padding-left: 3px; position: relative; white-space: nowrap; overflow: hidden; }
.dd::after { content: ""; position: absolute; right: 5px; top: 6px; border: 4px solid transparent; border-top: 5px solid #c4c4c4; border-bottom: 0; }
.dd.off { background: #454545; color: #7d7d7d; }
.dd.off::after { border-top-color: #6f6f6f; }
.inp { width: 182px; height: 17px; margin-bottom: 2px; background: #2a2a2a; border: 1px solid #212121; border-radius: 3px; padding-left: 3px; line-height: 15px; color: #c8c8c8; }
.cb { width: 14px; height: 14px; margin: 0 0 2px -1px; background: #2a2a2a; border: 1px solid #212121; border-radius: 2px; display: flex; align-items: center; justify-content: center; }
.help { height: 36px; margin-top: 1px; background: #353535; border: 1px solid #232323; border-radius: 3px; display: flex; align-items: center; gap: 5px; padding-left: 5px; font-size: 10.100px; color: #b8b8b8; white-space: nowrap; }
.after-help { margin-top: 3px; }
.learn { color: #7ba4e8; margin: 3px 0 0 auto; font-weight: 400; }
.h-link { margin-bottom: 2px; }
.sbar { width: 13px; margin-left: 4px; position: relative; flex: none; }
.sbar b { position: absolute; left: 2px; width: 9px; background: #5f5f5f; border-radius: 5px; }
.thumb-ps { top: 8px; height: 140px; }
.thumb-pf { top: 7px; height: 300px; width: 7px !important; }
.up { position: absolute; left: 3px; top: 0; border: 4px solid transparent; border-bottom: 5px solid #c4c4c4; border-top: 0; }
.dn { position: absolute; left: 3px; top: 415px; border: 4px solid transparent; border-top: 5px solid #c4c4c4; border-bottom: 0; }
.note { height: 17px; width: 431px; text-align: right; font-size: 10.200px; line-height: 17px; color: #7d7d7d; }
.regen { height: 17px; width: 250px; margin: 2px 0 0 15px; background: #585858; border-radius: 3px; text-align: center; line-height: 16px; color: #dcdcdc; }
.r-img { margin-top: 11px; }
.r-rev { margin-top: 10px; }
.r-two { margin-top: 1px; }
.i-path { width: 97px; }
.browse { width: 78px; height: 17px; margin: 0 0 2px 5px; background: #585858; border-radius: 3px; text-align: center; line-height: 16px; color: #d0d0d0; }
.win-pf .r-rev .dd { width: 179px; margin-left: 3px; }
.win-pf .row label { width: 250px; }
.win-pf .ind label { width: 237px; }

/* annotations */
.frame { position: absolute; border: 5px solid #ed1c24; z-index: 7; pointer-events: none; }
.frame-ps { left: 824px; top: 124px; width: 645px; height: 515px; }
.frame-pf { left: 1096px; top: 659px; width: 640px; height: 430px; }
.frame-edit { left: 31px; top: 16px; width: 38px; height: 31px; }
.ink { position: absolute; left: 0; top: 0; z-index: 8; fill: none; stroke: #ed1c24; stroke-width: 4.500; shape-rendering: crispEdges; }
.note-box { position: absolute; background: #fff; color: #ed1c24; z-index: 9; font: 39px/54px "Open Sans", sans-serif; white-space: nowrap; letter-spacing: -.3px; }
.nb-edit { left: 321px; top: 50px; width: 953px; height: 58px; padding: 1px 0 0 1px; }
.nb-proj { left: 1485px; top: 171px; width: 429px; height: 215px; padding-left: 1px; }
.nb-pref { left: 187px; top: 887px; width: 857px; height: 159px; }
```
